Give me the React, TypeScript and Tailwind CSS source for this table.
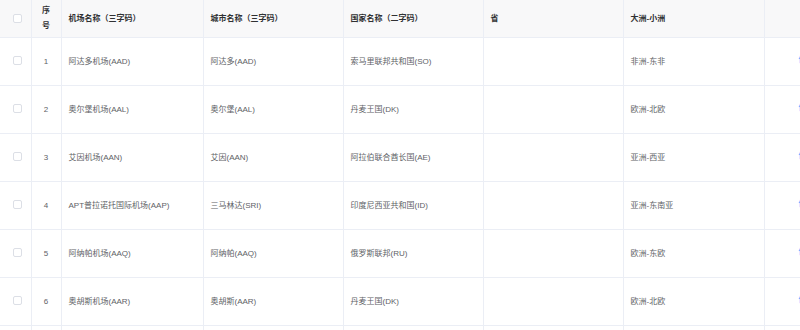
import React from 'react';

type Row = {
  id: number;
  airport: string;
  city: string;
  country: string;
  province: string;
  region: string;
};

const rows: Row[] = [
  { id: 1, airport: '阿达多机场(AAD)', city: '阿达多(AAD)', country: '索马里联邦共和国(SO)', province: '', region: '非洲-东非' },
  { id: 2, airport: '奥尔堡机场(AAL)', city: '奥尔堡(AAL)', country: '丹麦王国(DK)', province: '', region: '欧洲-北欧' },
  { id: 3, airport: '艾因机场(AAN)', city: '艾因(AAN)', country: '阿拉伯联合酋长国(AE)', province: '', region: '亚洲-西亚' },
  { id: 4, airport: 'APT普拉诺托国际机场(AAP)', city: '三马林达(SRI)', country: '印度尼西亚共和国(ID)', province: '', region: '亚洲-东南亚' },
  { id: 5, airport: '阿纳帕机场(AAQ)', city: '阿纳帕(AAQ)', country: '俄罗斯联邦(RU)', province: '', region: '欧洲-东欧' },
  { id: 6, airport: '奥胡斯机场(AAR)', city: '奥胡斯(AAR)', country: '丹麦王国(DK)', province: '', region: '欧洲-北欧' },
  { id: 7, airport: '阿勒泰机场(AAT)', city: '阿勒泰(AAT)', country: '中国(CN)', province: '新疆', region: '亚洲-东亚' },
];

function Checkbox() {
  return <span className="block w-[9px] h-[9px] rounded-[2px] border border-[#dcdfe6] bg-white ml-[13px]" />;
}

export default function App() {
  return (
    <div
      className="w-[800px] h-[330px] overflow-hidden bg-white"
      style={{ fontFamily: '"Liberation Sans", "Noto Sans CJK SC", sans-serif' }}
    >
      <table className="table-fixed border-collapse w-[880px] text-[8px] leading-[15px]">
        <colgroup>
          <col className="w-[31px]" />
          <col className="w-[30px]" />
          <col className="w-[142px]" />
          <col className="w-[140px]" />
          <col className="w-[140px]" />
          <col className="w-[140px]" />
          <col className="w-[141px]" />
          <col className="w-[116px]" />
        </colgroup>
        <thead>
          <tr className="h-[37px] bg-[#f8f8f9] text-[#303133] font-bold">
            <th className="border-b border-r border-[#ebeef5] p-0">
              <Checkbox />
            </th>
            <th className="border-b border-r border-[#ebeef5] px-[8px] text-center">序号</th>
            <th className="border-b border-r border-[#ebeef5] px-[7px] text-left">机场名称（三字码）</th>
            <th className="border-b border-r border-[#ebeef5] px-[7px] text-left">城市名称（三字码）</th>
            <th className="border-b border-r border-[#ebeef5] px-[7px] text-left">国家名称（二字码）</th>
            <th className="border-b border-r border-[#ebeef5] px-[7px] text-left">省</th>
            <th className="border-b border-r border-[#ebeef5] px-[7px] text-left">大洲-小洲</th>
            <th className="border-b border-[#ebeef5] px-[7px] text-left"></th>
          </tr>
        </thead>
        <tbody className="text-[#606266]">
          {rows.map((r) => (
            <tr key={r.id} className="h-[48px]">
              <td className="border-b border-r border-[#ebeef5] p-0 align-middle">
                <div className="-mt-[2px]">
                  <Checkbox />
                </div>
              </td>
              <td className="border-b border-r border-[#ebeef5] text-center">{r.id}</td>
              <td className="border-b border-r border-[#ebeef5] px-[7px] whitespace-nowrap">{r.airport}</td>
              <td className="border-b border-r border-[#ebeef5] px-[7px] whitespace-nowrap">{r.city}</td>
              <td className="border-b border-r border-[#ebeef5] px-[7px] whitespace-nowrap">{r.country}</td>
              <td className="border-b border-r border-[#ebeef5] px-[7px] whitespace-nowrap">{r.province}</td>
              <td className="border-b border-r border-[#ebeef5] px-[7px] whitespace-nowrap">{r.region}</td>
              <td className="border-b border-[#ebeef5] pl-[34px] whitespace-nowrap text-[#409eff]">
                <span className="relative -top-[2px]">修改</span>
              </td>
            </tr>
          ))}
        </tbody>
      </table>
    </div>
  );
}
